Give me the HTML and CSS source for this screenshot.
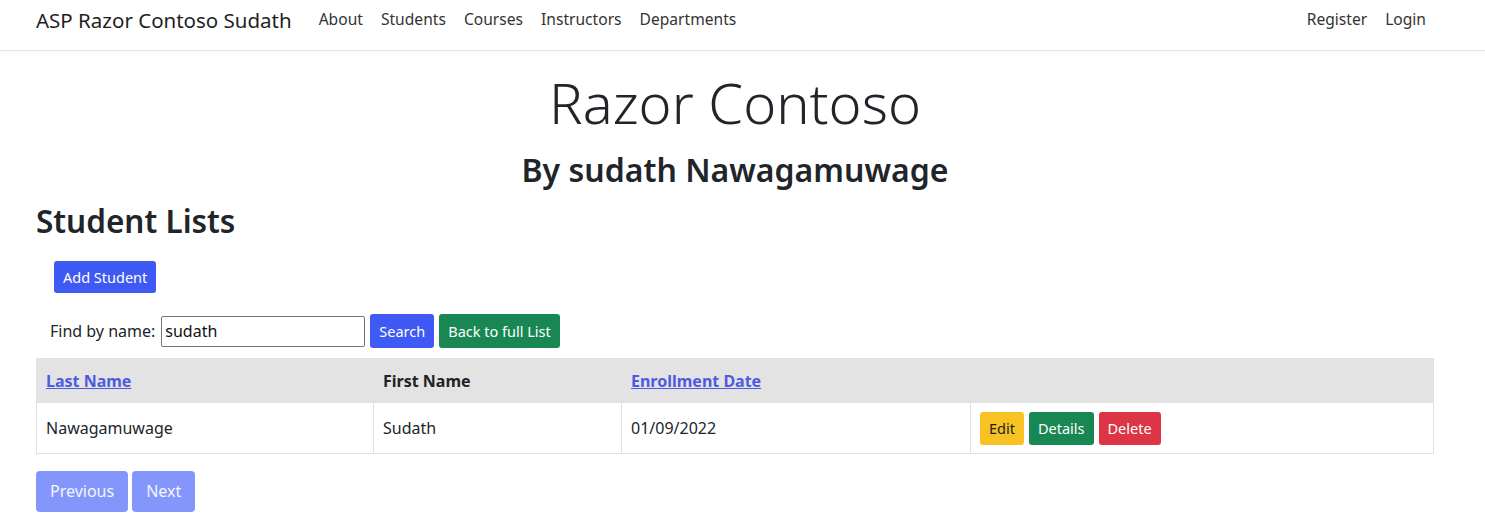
FILE: index.html
```html
<!DOCTYPE html>
<html lang="en">
<head>
<meta charset="utf-8">
<title>Student Lists - ASP Razor Contoso Sudath</title>
<link rel="stylesheet" href="styles.css">
</head>
<body>
<header class="navbar">
  <div class="nav-inner">
    <a class="brand" href="#">ASP Razor Contoso Sudath</a>
    <ul class="nav-main">
      <li><a href="#">About</a></li>
      <li><a href="#">Students</a></li>
      <li><a href="#">Courses</a></li>
      <li><a href="#">Instructors</a></li>
      <li><a href="#">Departments</a></li>
    </ul>
    <ul class="nav-right">
      <li><a href="#">Register</a></li>
      <li><a href="#">Login</a></li>
    </ul>
  </div>
</header>
<main class="container">
  <div class="hero">
    <h1 class="display">Razor Contoso</h1>
    <h2 class="byline">By sudath Nawagamuwage</h2>
  </div>
  <h1 class="page-title">Student Lists</h1>
  <div class="add-row">
    <a class="btn btn-primary" href="#">Add Student</a>
  </div>
  <form class="search">
    <label class="search-label">Find by name:</label>
    <input class="search-input" type="text" value="sudath">
    <button class="btn btn-primary btn-search" type="button">Search</button>
    <a class="btn btn-success btn-search" href="#">Back to full List</a>
  </form>
  <table class="table">
    <colgroup>
      <col class="c1"><col class="c2"><col class="c3"><col class="c4">
    </colgroup>
    <thead>
      <tr>
        <th><a href="#">Last Name</a></th>
        <th>First Name</th>
        <th><a href="#">Enrollment Date</a></th>
        <th></th>
      </tr>
    </thead>
    <tbody>
      <tr>
        <td>Nawagamuwage</td>
        <td>Sudath</td>
        <td>01/09/2022</td>
        <td>
          <div class="actions">
            <a class="btn btn-warning" href="#">Edit</a>
            <a class="btn btn-success" href="#">Details</a>
            <a class="btn btn-danger" href="#">Delete</a>
          </div>
        </td>
      </tr>
    </tbody>
  </table>
  <div class="pager">
    <a class="btn btn-primary btn-lg disabled" href="#">Previous</a>
    <a class="btn btn-primary btn-lg disabled" href="#">Next</a>
  </div>
</main>
</body>
</html>
```
FILE: styles.css
```css
* { box-sizing: border-box; }
html, body { margin: 0; }
body {
  font-family: "Noto Sans", "Open Sans", sans-serif;
  font-size: 16px;
  color: #212529;
  background: #fff;
  line-height: 1.5;
}
a { text-decoration: none; }
ul { list-style: none; margin: 0; padding: 0; }

.navbar {
  height: 51px;
  border-bottom: 1px solid #e6e6e6;
  box-shadow: 0 1px 3px rgba(0,0,0,0.04);
}
.nav-inner {
  display: flex;
  align-items: center;
  height: 40px;
  padding: 0 50px 0 36px;
}
.brand {
  font-size: 20.5px;
  color: #1f1f1f;
  margin-right: 18px;
}
.nav-main, .nav-right { display: flex; }
.nav-main a, .nav-right a {
  display: block;
  padding: 0 8px;
  margin: 0 1px;
  font-size: 15.6px;
  color: #333;
}
.nav-right { margin-left: auto; }

.container { padding: 0 51px 0 36px; }
.hero { text-align: center; }
.display {
  font-size: 56px;
  font-weight: 300;
  line-height: 66px;
  margin: 18px 0 0;
  color: #212529;
}
.byline {
  font-size: 32px;
  font-weight: 600;
  line-height: 40px;
  margin: 15px 0 0;
}
.page-title {
  font-size: 31.5px;
  font-weight: 600;
  line-height: 44px;
  margin: 9px 0 0;
}
.add-row { padding: 18px 0 0 18px; }
.btn {
  display: inline-block;
  border: 0;
  border-radius: 3px;
  font-family: inherit;
  font-size: 14.5px;
  line-height: 32px;
  padding: 0 9px;
  color: #fff;
  cursor: pointer;
  vertical-align: middle;
}
.btn-primary { background: #3f59f4; }
.btn-success { background: #198754; }
.btn-danger { background: #dc3545; }
.btn-warning { background: #f8c225; color: #1d1d1d; }

.search {
  display: flex;
  align-items: center;
  padding: 21px 0 10px 14px;
  gap: 5px;
}
.search-label { font-size: 16px; margin-right: 1px; }
.search-input {
  width: 204px;
  height: 31px;
  border: 1px solid #767676;
  border-radius: 2px;
  font-family: inherit;
  font-size: 16px;
  padding: 0 3px;
  color: #111;
}
.btn-search { line-height: 34px; }

.table {
  width: 100%;
  border-collapse: collapse;
  border: 1px solid #dee2e6;
}
.c1 { width: 337px; }
.c2 { width: 248px; }
.c3 { width: 349px; }
.table th, .table td {
  border: 1px solid #dee2e6;
  text-align: left;
  padding: 0 9px;
  font-size: 16px;
}
.table th {
  background: #e3e3e3;
  height: 44px;
  font-weight: 700;
  color: #222;
}
.table th a { color: #4d5be0; text-decoration: underline; }
.table td { height: 51px; vertical-align: middle; }
.actions { display: flex; gap: 5px; }
.actions .btn { line-height: 33px; }

.pager {
  display: flex;
  gap: 4px;
  padding-top: 17px;
}
.btn-lg {
  font-size: 16px;
  line-height: 41px;
  padding: 0 14px;
  border-radius: 4px;
}
.disabled { background: #8495fb; color: #f3f5ff; }
```
